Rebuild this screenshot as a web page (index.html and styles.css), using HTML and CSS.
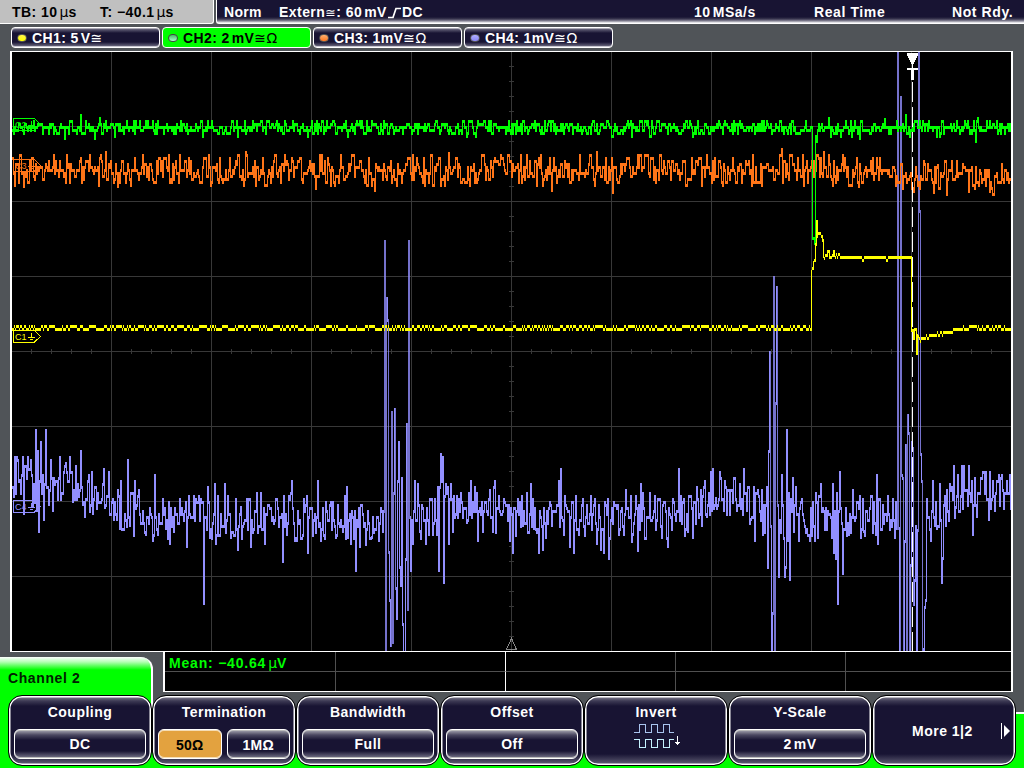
FILE: index.html
```html
<!DOCTYPE html>
<html lang="en">
<head>
<meta charset="utf-8">
<title>Oscilloscope</title>
<link rel="stylesheet" href="styles.css">
</head>
<body>
<div class="screen">
  <header class="status">
    <div class="timebase"><span class="tb">TB: 10<i class="mu">µ</i>s</span><span class="tpos">T: −40.1<i class="mu">µ</i>s</span></div>
    <div class="trigger"><span class="mode">Norm</span><span class="source">Extern<i class="coup">≅</i>: 60<i class="sp"></i>mV<svg class="edge" width="13" height="13" viewBox="0 0 13 13"><path d="M0 11.5H5L8 2.5H13" fill="none" stroke="#fff" stroke-width="1.7"/></svg>DC</span><span class="rate">10<i class="sp"></i>MSa/s</span><span class="acq">Real Time</span><span class="state">Not Rdy.</span></div>
  </header>
  <nav class="channels">
    <div class="chan"><i class="led yellow"></i><span>CH1: 5<i class="sp"></i>V<i class="coup">≅</i></span></div>
    <div class="chan active"><i class="led green"></i><span>CH2: 2<i class="sp"></i>mV<i class="coup">≅Ω</i></span></div>
    <div class="chan"><i class="led orange"></i><span>CH3: 1mV<i class="coup">≅Ω</i></span></div>
    <div class="chan"><i class="led violet"></i><span>CH4: 1mV<i class="coup">≅Ω</i></span></div>
  </nav>
  <main class="plot">
    <svg id="scope" width="999" height="599" viewBox="12 52 999 599" shape-rendering="crispEdges"></svg>
  </main>
  <footer class="bottom">
    <div class="tab">Channel 2</div>
    <div class="measure">
      <div class="cell">Mean: −40.64<i class="mu">µ</i>V</div><div class="cell bright"></div><div class="cell"></div><div class="cell"></div><div class="cell"></div>
      <div class="cell"></div><div class="cell bright"></div><div class="cell"></div><div class="cell"></div><div class="cell"></div>
    </div>
    <div class="menu">
      <div class="key"><b>Coupling</b><div class="values"><span class="value">DC</span></div></div>
      <div class="key"><b>Termination</b><div class="values"><span class="value chosen tight">50Ω</span><span class="value tight">1MΩ</span></div></div>
      <div class="key"><b>Bandwidth</b><div class="values"><span class="value">Full</span></div></div>
      <div class="key"><b>Offset</b><div class="values"><span class="value">Off</span></div></div>
      <div class="key"><b>Invert</b>
        <svg class="invert" width="48" height="26" viewBox="0 0 48 26" shape-rendering="crispEdges" fill="none"><path d="M0 9.5H5.5V1.5H11.5V9.5H17.500V1.500H23.500V9.500H29.500V1.500H35.500V9.500H40" stroke="#a9c4ee"/><path d="M0 16.500H5.500V24.500H11.500V16.500H17.500V24.500H23.500V16.500H29.500V24.500H35.500V16.500H40" stroke="#c6f2ff"/><path d="M43.500 13V22M41 19.500H46M42 20.500H45" stroke="#fff"/></svg>
      </div>
      <div class="key"><b>Y-Scale</b><div class="values"><span class="value">2<i class="sp"></i>mV</span></div></div>
      <div class="key more"><b>More 1|2</b><svg class="next" width="9" height="16" viewBox="0 0 9 16"><path d="M.5 0V16" stroke="#fff"/><path d="M3 2L9 8L3 14Z" fill="#fff"/></svg></div>
    </div>
  </footer>
</div>
<script src="scope.js"></script>
</body>
</html>
```
FILE: styles.css
```css
* { box-sizing: border-box; }
body { margin: 0; background: #505458; }
i { font-style: normal; }
.screen { width: 1024px; height: 768px; overflow: hidden; display: flex; flex-direction: column; background: #505458; color: #fff; font: bold 14px/16px "Liberation Sans", Arial, sans-serif; letter-spacing: .6px; white-space: nowrap; }
.mu { font-family: "DejaVu Sans", sans-serif; font-weight: normal; font-size: 14px; line-height: 1px; margin-left: 2px; letter-spacing: 0; }
.sp { display: inline-block; width: 2px; }
.coup { font-family: "DejaVu Sans", sans-serif; font-weight: normal; font-size: 14px; line-height: 1px; letter-spacing: .5px; }

.status { display: flex; gap: 2px; height: 24px; }
.timebase { width: 214px; height: 24px; padding: 4px 0 0 12px; display: grid; grid-template-columns: 88px 1fr; color: #000; background: #c0c0c0; border-right: 1px solid #fff; border-bottom: 1px solid #fff; border-bottom-right-radius: 3px; letter-spacing: .45px; }
.trigger { flex: 1; height: 24px; padding: 4px 0 0 7px; display: grid; grid-template-columns: 55px 415px 120px 138px 1fr; border-left: 1px solid #fff; border-bottom: 1px solid #fff; border-bottom-left-radius: 3px; background: linear-gradient(#181433 17px, #3a3750 19px, #8a8898 21px, #fff 23px); }
.trigger .mode { letter-spacing: .3px; }
.trigger .source { letter-spacing: .45px; }
.trigger .source .coup { font-size: 12.500px; }
.trigger .rate { letter-spacing: .55px; }
.edge { vertical-align: -2px; margin: 0 1px 0 1px; }

.channels { display: flex; gap: 2px; height: 27px; padding: 3px 0 0 11px; }
.chan { width: 149px; height: 21px; padding: 0 5px; display: flex; align-items: center; gap: 5px; border: 1px solid #fff; border-radius: 4px; background: linear-gradient(#77758a, #181433 5px, #181433 14px, #77758a); box-shadow: inset 0 1px #aaa9b4, inset 0 -1px #c8c7d0; letter-spacing: .4px; }
.chan.active { background: #0f0; color: #000; box-shadow: none; }
.led { width: 10px; height: 8px; border: 1px solid #555; border-radius: 4px; }
.yellow { background: linear-gradient(#fff24a, #ff0); }
.green { border: 1.5px solid #444; background: linear-gradient(#4b6, #afc); }
.orange { background: linear-gradient(#ffb070, #ff771f); }
.violet { background: linear-gradient(#b0afff, #8984f5); }

.plot { width: 1003px; height: 601px; margin-left: 10px; border: 1px solid #fff; border-left-width: 2px; border-right-width: 2px; background: #000; }
#scope { display: block; width: 999px; height: 599px; }
#scope text { font: 9px "Liberation Sans", sans-serif; letter-spacing: 0; }

.bottom { height: 116px; display: grid; grid-template-columns: 153px 10px 850px; grid-template-rows: 40px 3px 73px; background: linear-gradient(#505458 60px, #fff 60px, #fff 62px, #0f0 62px); }
.tab { grid-area: 1 / 1 / 4 / 2; height: 60px; margin-top: 5px; padding: 13px 8px; border-right: 2px solid #fff; border-top-right-radius: 12px; background: linear-gradient(#fff, #b4ffb4 5px, #0f0 13px); color: #002000; letter-spacing: .6px; box-shadow: 0 2px #0f0; }
.measure { grid-area: 1 / 3; display: grid; grid-template-columns: 171px 170px 170px 170px 1fr; grid-template-rows: 20px 19px; border: 1px solid #fff; border-left-width: 2px; border-right-width: 2px; border-top: 0; background: #000; }
.cell { padding: 3px 0 0 4px; border-right: 1px solid #505050; border-bottom: 1px solid #505050; color: #0f0; letter-spacing: .8px; }
.cell.bright { border-right-color: #fff; }
.cell:nth-child(5n) { border-right: 0; }
.cell:nth-child(n+6) { border-bottom: 0; }

.menu { grid-area: 3 / 1 / 4 / 4; display: flex; padding-left: 8px; z-index: 1; }
.key { flex: none; width: 144px; height: 71px; padding: 7px 4px 0; display: flex; flex-direction: column; align-items: center; border: 1px solid #000; border-radius: 14px; background: linear-gradient(#8a8898, #3d3a54 5px, #181433 10px, #181433 58px, #66647a); box-shadow: inset 0 0 0 1.5px #fff; letter-spacing: .5px; }
.key b { margin-top: 1px; }
.values { width: 134px; height: 30px; margin-top: 9px; display: flex; gap: 3px; }
.value { flex: 1; margin: 0 1px; padding-top: 6px; text-align: center; border: 1.500px solid #fff; border-radius: 6px; background: linear-gradient(#aaa9b4, #4a4760 5px, #181433 10px, #181433 21px, #77758a); box-shadow: inset 0 1px #bbb, inset 0 -1px #bbb; }
.tight { letter-spacing: .2px; padding-top: 7px; }
.value.chosen { color: #000; background: #e3a23f; box-shadow: inset 0 1px #f5dcb4, inset 0 -1px #f5dcb4; }
.invert { margin: 3px 0 0 4px; }
.more { flex-direction: row; padding: 0 5px 0 39px; justify-content: space-between; }
```
FILE: scope.js
```js
const svg = document.getElementById('scope');
const NS = 'http://www.w3.org/2000/svg';
function add(tag, attrs, text) {
  const el = document.createElementNS(NS, tag);
  for (const k in attrs) el.setAttribute(k, attrs[k]);
  if (text) el.textContent = text;
  svg.appendChild(el);
}
function path(d, color, extra) {
  add('path', Object.assign({ d, stroke: color, fill: 'none' }, extra));
}

// Graticule
let g = '';
for (let x = 111; x < 1011; x += 100) g += `M${x + .5} 52V651`;
for (let y = 126; y < 651; y += 75) g += `M12 ${y + .5}H1012`;
for (let x = 31; x < 1011; x += 20) g += `M${x + .5} 349V354`;
for (let y = 66; y < 651; y += 15) g += `M509 ${y + .5}H514`;
path(g, '#383838');
path('M511.500 638.500L506.500 649.500H516.500Z', '#888');

let seed = 20;
function rnd() {
  seed = (seed * 1664525 + 1013904223) % 4294967296;
  return seed / 4294967296;
}
function parse(s) {
  return s.trim().split(/\s+/).map(p => p.split(',').map(Number));
}

// One column per pixel, spanning the previous and the current sample.
function trace(sample, color, fixed) {
  const known = new Map(fixed);
  let prev = null, y = sample(12), solid = '', dim = '';
  for (let x = 12; x < 1012; x++) {
    if (known.has(x)) y = known.get(x);
    else if (rnd() < .8 || known.has(x - 1)) y = sample(x);
    if (prev === null) prev = y;
    const a = Math.min(prev, y) - 1, b = Math.max(prev, y) + 2;
    const seg = `M${x + .5} ${a}V${b}`;
    if (b - a > 150) dim += seg; else solid += seg;
    prev = y;
  }
  path(solid, color);
  if (dim) path(dim, color, { opacity: .8 });
}
const q = (v, o) => Math.round((v - o) / 3) * 3 + o;
let side = 1;
function noise() {
  if (rnd() < .55) side = -side;
  const m = rnd();
  return side * (m * .55 + m * m * m * .4);
}

// Channel 4
const ch4 = parse(`
14,457 19,480 22,457 23,513 25,466 32,505 35,430 36,510 37,451 38,531 40,442 43,519 45,430 48,504 50,460 52,510 56,481 59,457 63,472 69,457 72,501 75,466 80,451 82,504 84,516 88,475 91,472 92,513 103,469 104,507 108,472 113,519 116,519 117,490 119,528 120,481 127,460 129,525 134,481 138,490 145,534 149,508 152,540 154,475 157,534 162,499 165,528 168,502 169,543 173,531 180,514 185,502 186,546 188,496 193,496 198,496 203,603 207,487 209,537 214,484 215,543 217,496 224,484 230,537 235,499 237,549 240,507 250,546 256,493 260,493 264,543 276,499 282,561 283,496 286,534 288,496 291,481 294,540 296,540 303,499 306,496 307,552 317,481 320,540 325,502 329,505 335,537
342,531 344,496 346,487 347,537 350,543 352,517 355,570 358,508 359,546 362,514 367,511 371,537 376,517 378,540 380,508 382,531 383,511 384,241 385,651 386,298 387,320 388,552 389,600 390,645 391,412 392,642 393,493 394,409 395,588 396,618 397,481 398,442 399,567 400,585 401,478 402,624 403,660 404,660 405,559 406,424 407,609 408,241 409,517 410,570 411,520 412,543 414,481 415,520 416,520 417,484 419,531 421,505 425,543 426,508 428,534 431,499 432,534 434,499 436,534 437,487 438,570 439,487 440,454 441,481 442,457 443,582 444,496 445,484 447,487 448,543 450,484 452,531 453,496 456,496 460,493 466,522 470,481 477,540 481,502 482,531 489,490 492,531 494,481 503,499 509,540 512,552 517,499 522,525 526,493 530,484 533,528 538,552 539,511 542,549 543,508 545,537 549,502 551,525 558,481 560,469 563,534 569,546 572,502 573,552 575,496 578,534 582,499 586,505 590,496 594,499 596,543 600,549 603,552 604,502 607,499 608,558 613,502 618,534 621,508 623,534 625,490 630,496 632,534 635,496 637,550 640,484 642,493 649,493 654,496 661,537 665,511 667,546 669,514 672,499 678,469
687,531 688,496 692,537 700,490 701,525 704,481 706,516 710,472 711,510 712,469 715,498 719,472 723,510 727,490 733,478 734,478 736,510 739,484 743,469 746,510 750,519 753,487 754,540 758,496 761,490 762,534 767,567 768,451 769,352 770,526 771,660 772,613 773,277 774,651 775,403 776,287 777,505 778,576 779,520 781,475 783,538 784,576 785,567 786,430 787,540 788,493 789,579 790,499 792,478 793,531 795,487 798,540 801,499 809,540 812,502 814,540 817,537 820,484 831,537 832,484 833,552 835,558 836,493 837,603 839,472 842,573 845,508 848,534 852,490 859,496 860,537 863,531 871,496 873,502 875,534 876,475 877,543 882,505 892,499 894,537 896,528 897,20 898,528 899,660 900,97 901,475 902,478 903,649 904,541 905,445 906,660 907,415 908,433 909,660 910,565 911,442 912,448 913,604 914,580 915,526 916,660 917,530 918,30 919,211 920,454 921,481 922,649 923,660 924,607 925,600 926,499 927,517 928,517 930,540 932,481 934,525 936,528 939,484 940,520 941,582 942,558 943,505 945,525 949,484 953,466 955,507 957,475 961,466 963,466 966,490 968,466 970,501 972,534 974,478 976,516 981,478 985,472 988,519 992,481 994,510 998,475 1001,475 1006,481 1009,475`);
function base4(x) {
  const pts = [[12, 475], [55, 483], [90, 493], [140, 518], [200, 516], [300, 517], [360, 525], [480, 510], [600, 520], [680, 515], [720, 496], [760, 510], [820, 514], [900, 516], [940, 510], [970, 493], [1012, 492]];
  let i = 1;
  while (pts[i][0] < x) i++;
  const [x0, y0] = pts[i - 1], [x1, y1] = pts[i];
  return y0 + (y1 - y0) * (x - x0) / (x1 - x0);
}
trace(x => q(base4(x) + noise() * 24, 1), '#928fff', ch4);

// Channel 3
trace(x => q((x < 895 ? 170 : 177) + noise() * 17, 2), '#ff7518', parse('19,155 23,186 53,155 89,155 105,152 117,186 208,155 211,182 245,152 315,188 321,155 374,190 448,153 551,190 596,152 612,192 781,149 803,185 823,152 858,186 933,192 937,165 989,191'));

// Channel 2
trace(x => q(127.500 + noise() * 8, 1), '#0f0', parse('64,138 80,115 94,138 99,118 812,238 813,238 814,243 815,136 816,141 817,130 828,118 859,138 883,127 884,119 905,115 975,141 977,118'));

// Channel 1
const ch1 = parse(`811,271 812,268 813,262 814,260 815,244 816,221 817,236 818,233 819,233 820,233 821,236 822,240 823,256 824,258 825,255 826,255 827,251 828,251 829,257 830,257 831,257 832,255 833,251 834,255 835,257 836,254 837,257 838,254 839,254`);
for (let x = 840; x < 911; x++) ch1.push([x, x === 862 || x === 863 || x === 886 || x === 887 ? 260 : 257]);
ch1.push(...parse('911,330 912,330 913,338 914,329 915,329 916,353 917,335 918,336 919,338 920,341'));
for (let x = 921; x < 965; x++) ch1.push([x, q(338 - (x - 921) * .25 + (rnd() - .5) * 2, 2)]);
const map1 = new Map(ch1);
let level = 326, left = 0, d1 = '', before = 326;
for (let x = 12; x < 1012; x++) {
  if (left-- <= 0) {
    level = level === 326 ? 329 : 326;
    left = Math.floor(rnd() * 3) + (rnd() < .15 ? 5 : 0);
  }
  const y = map1.has(x) ? map1.get(x) : level;
  const jump = Math.abs(y - before) > 3;
  d1 += `M${x + .5} ${(jump ? Math.min(y, before) : y) - 1}V${(jump ? Math.max(y, before) : y) + 2}`;
  before = y;
}
path(d1, '#ff0');

// Trigger position
path('M912.500 82V651', '#fff', { 'stroke-dasharray': '20 5' });
add('path', { d: 'M907 53H918V56H917V58H916V60H915V62H914V64H911V62H910V60H909V58H908V56H907ZM912 64H913V68H918V70H914V80H911V70H907V68H912Z', fill: '#fff' });

// Ground markers
[['C1', 330, '#ff0'], ['C2', 118, '#0f0'], ['C3', 159, '#ff7518'], ['C4', 500, '#928fff']].forEach(([name, y, color]) => {
  path(`M13.500 ${y + .5}H34.500L40.500 ${y + 6.500}L34.500 ${y + 12}H13.500Z`, color);
  add('text', { x: 15, y: y + 9.500, fill: color }, name);
  path(`M31.500 ${y + 3}V${y + 7}M28 ${y + 7.500}H35M30 ${y + 9.500}H33`, color);
});
```
